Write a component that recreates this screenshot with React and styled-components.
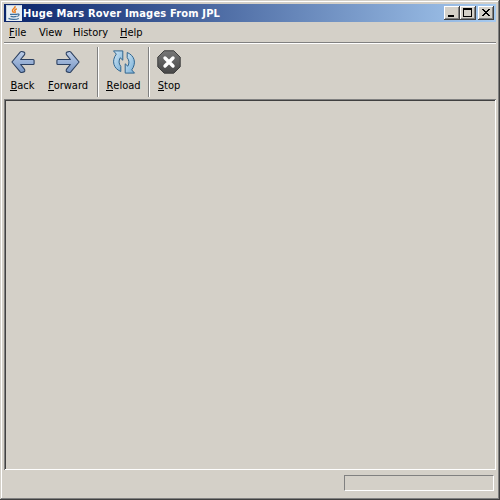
import styled, { createGlobalStyle } from "styled-components";

const GlobalStyle = createGlobalStyle`
  * {
    box-sizing: border-box;
  }
  body {
    margin: 0;
    overflow: hidden;
    background: #d4d0c8;
    font-family: "DejaVu Sans Condensed", "DejaVu Sans", sans-serif;
    font-stretch: condensed;
    font-size: 11px;
    color: #000;
  }
`;

const Window = styled.div`
  width: 500px;
  height: 500px;
  display: flex;
  flex-direction: column;
  padding: 2px;
  background: #d4d0c8;
  box-shadow: inset -1px -1px #404040, inset 1px 1px #d4d0c8,
    inset -2px -2px #808080, inset 2px 2px #fff;
`;

const TitleBar = styled.div`
  display: flex;
  align-items: center;
  height: 18px;
  margin: 2px 2px 0;
  padding: 0 2px;
  background: linear-gradient(to right, #0a246a, #a6caf0);
`;

const Title = styled.h1`
  flex: 1;
  margin: 0 0 0 1px;
  padding-top: 1px;
  font-size: 11px;
  line-height: 18px;
  font-weight: bold;
  letter-spacing: 0.17px;
  white-space: nowrap;
  color: #fff;
`;

const WindowButton = styled.button`
  width: 16px;
  height: 14px;
  margin: 0 0 0 ${({ $gap }) => $gap || "0"};
  padding: 0;
  border: none;
  display: flex;
  background: #d4d0c8;
  box-shadow: inset -1px -1px #404040, inset 1px 1px #fff,
    inset -2px -2px #808080;
`;

const MenuBar = styled.div`
  display: flex;
  height: 20px;
  padding: 1px 0 0 7px;
`;

const MenuItem = styled.div`
  width: ${({ $width }) => $width};
  line-height: 20px;
  white-space: nowrap;
`;

const Mnemonic = styled.span`
  display: inline-block;
  line-height: 9px;
  box-shadow: 0 1px #000;
`;

const ToolBar = styled.div`
  display: flex;
  height: 57px;
  margin: 0 2px;
  border-top: 1px solid #808080;
  box-shadow: inset 0 1px #fff;
`;

const ToolGroup = styled.div`
  display: flex;
`;

const ToolButton = styled.div`
  width: ${({ $width }) => $width};
  padding-top: 7px;
  display: flex;
  flex-direction: column;
  align-items: center;

  svg {
    flex-shrink: 0;
  }
`;

const ToolLabel = styled.span`
  height: 16px;
  margin-top: 4px;
  line-height: 16px;
  white-space: nowrap;
`;

const Separator = styled.div`
  width: 2px;
  height: 50px;
  margin: 4px 0 0 ${({ $gap }) => $gap || "0"};
  border-left: 1px solid #808080;
  border-right: 1px solid #fff;
`;

const Content = styled.div`
  height: 371px;
  margin: 0 2px;
  box-shadow: inset 1px 1px #808080, inset -1px -1px #fff,
    inset 2px 2px #404040;
`;

const StatusBar = styled.div`
  display: flex;
  justify-content: flex-end;
  padding: 5px 4px 0 0;
`;

const Progress = styled.div`
  width: 150px;
  height: 16px;
  border: 1px solid;
  border-color: #808080 #fff #fff #808080;
`;

const JavaIcon = () => (
  <svg width="16" height="16" viewBox="0 0 16 16">
    <rect width="16" height="16" fill="#e8eef3" />
    <path d="M.5 15.5V.5h15" fill="none" stroke="#c4d2df" />
    <path
      d="M9 1c1 2-3.3 3-2.5 4.8.3.9 1 1.3 1.2 2M10.8 3.8c-1.8.7-2.6 1.5-1.8 2.4.5.6.2 1.2-.3 1.8"
      fill="none"
      stroke="#ee7d1c"
      strokeWidth="1.5"
    />
    <path
      d="M4 9.4h7M4.6 11.4c2 .6 4 .6 6 0M11 9.2c3-.8 2.5 1.7.2 2.3M2.5 13.4c2.4 1.3 8 1.3 10.3 0"
      fill="none"
      stroke="#3f6f9c"
      strokeWidth="1.2"
    />
  </svg>
);

const Arrow = ({ forward }) => (
  <svg width="24" height="24" viewBox="0 0 24 24">
    <defs>
      <linearGradient id="arrow" x2="0" y2="1">
        <stop offset="0" stopColor="#bccde8" />
        <stop offset="1" stopColor="#7896c4" />
      </linearGradient>
    </defs>
    <path
      transform={forward ? "translate(24 0) scale(-1 1)" : undefined}
      d="M.9 12 9.4 1.9q.6-.6 1.4-.4l2.2.6q1 .5.8 1.6-.1.8-.6 1.4L9.6 9.5h12.5q1 0 1 1v3q0 1-1 1H9.6l3.6 4.4q.5.6.6 1.4.2 1.1-.8 1.6l-2.2.6q-.8.2-1.4-.4Z"
      fill="url(#arrow)"
      stroke="#2c4060"
      strokeWidth="1.1"
      strokeLinejoin="round"
    />
  </svg>
);

const ReloadIcon = () => (
  <svg width="24" height="24" viewBox="0 0 24 24">
    <defs>
      <linearGradient id="reload" x2="1" y2="1">
        <stop offset="0" stopColor="#d3e8f6" />
        <stop offset="1" stopColor="#75add5" />
      </linearGradient>
    </defs>
    <g fill="url(#reload)" stroke="#30658f" strokeLinejoin="round">
      <path d="M1.5.9h9.3v9.3L8.2 7.8c-1.7 3-1.5 5.8.6 8.6v5.1C1.6 18.6-.8 11 4.3 4.1Z" />
      <path d="M22.5 23.1h-9.3v-9.3l2.6 2.4c1.7-3 1.5-5.8-.6-8.6V2.5c7.2 2.9 9.6 10.5 4.5 17.4Z" />
    </g>
  </svg>
);

const StopIcon = () => (
  <svg width="24" height="24" viewBox="0 0 24 24">
    <defs>
      <linearGradient id="stop" x2="0" y2="1">
        <stop offset="0" stopColor="#777" />
        <stop offset="1" stopColor="#484848" />
      </linearGradient>
    </defs>
    <path
      d="M7.2.8h9.6l6.4 6.4v9.6l-6.4 6.4H7.2L.8 16.8V7.2Z"
      fill="url(#stop)"
      stroke="#3d3d3d"
      strokeLinejoin="round"
    />
    <path
      d="m8 8 8 8m0-8-8 8"
      stroke="#fff"
      strokeWidth="3.4"
      strokeLinecap="round"
    />
  </svg>
);

const Glyph = ({ d }) => (
  <svg width="16" height="14" viewBox="0 0 16 14" shapeRendering="crispEdges">
    <path d={d} fillRule="evenodd" />
  </svg>
);

const tools = [
  { label: "Back", width: "37px", icon: <Arrow /> },
  { label: "Forward", width: "54px", icon: <Arrow forward /> },
  {
    label: "Reload",
    width: "49px",
    icon: <ReloadIcon />,
    separator: true,
    gap: "2px",
  },
  { label: "Stop", width: "38px", icon: <StopIcon />, separator: true },
];

const menus = [
  { label: "File", width: "30px", key: true },
  { label: "View", width: "34px" },
  { label: "History", width: "47px" },
  { label: "Help", width: "30px", key: true },
];

const App = () => {
  return (
    <>
      <GlobalStyle />
      <Window>
        <TitleBar>
          <JavaIcon />
          <Title>Huge Mars Rover Images From JPL</Title>
          <WindowButton>
            <Glyph d="M4 9h6v2H4z" />
          </WindowButton>
          <WindowButton>
            <Glyph d="M3 2h9v9H3zM4 4v6h7V4z" />
          </WindowButton>
          <WindowButton $gap="2px">
            <Glyph d="M4 3h2v1h1v1h2V4h1V3h2v1h-1v1h-1v1H9v1h1v1h1v1h1v1h-2V9H9V8H7v1H6v1H4V9h1V8h1V7h1V6H6V5H5V4H4z" />
          </WindowButton>
        </TitleBar>
        <MenuBar>
          {menus.map(({ label, width, key }) => (
            <MenuItem key={label} $width={width}>
              {key ? <Mnemonic>{label[0]}</Mnemonic> : label[0]}
              {label.slice(1)}
            </MenuItem>
          ))}
        </MenuBar>
        <ToolBar>
          {tools.map(({ label, width, icon, separator, gap }) => (
            <ToolGroup key={label}>
              {separator && <Separator $gap={gap} />}
              <ToolButton $width={width}>
                {icon}
                <ToolLabel>
                  <Mnemonic>{label[0]}</Mnemonic>
                  {label.slice(1)}
                </ToolLabel>
              </ToolButton>
            </ToolGroup>
          ))}
        </ToolBar>
        <Content />
        <StatusBar>
          <Progress />
        </StatusBar>
      </Window>
    </>
  );
};

export default App;
